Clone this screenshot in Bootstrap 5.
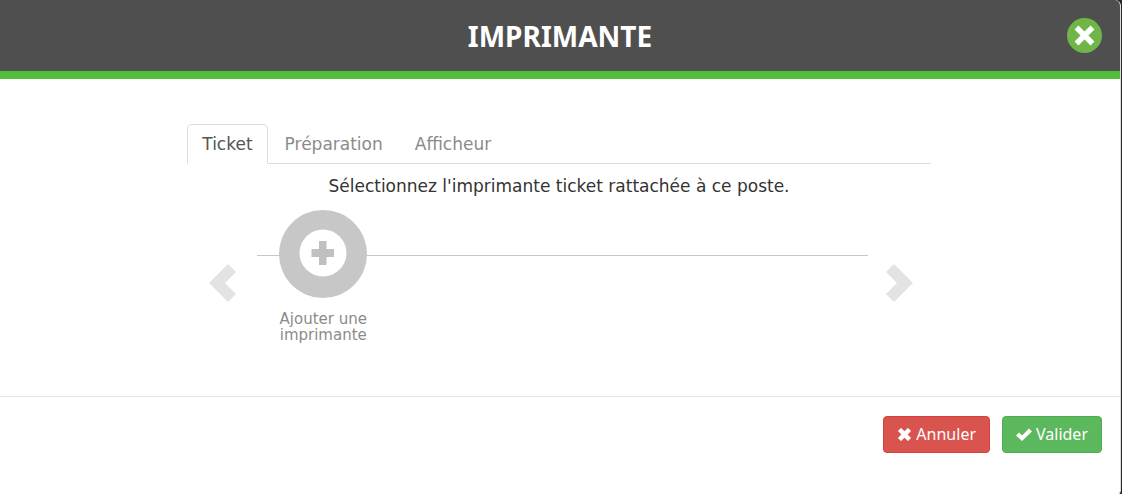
<!DOCTYPE html>
<html lang="fr">
<head>
<meta charset="utf-8">
<meta name="viewport" content="width=device-width, initial-scale=1">
<title>Imprimante</title>
<link href="https://cdn.jsdelivr.net/npm/bootstrap@5.3.0/dist/css/bootstrap.min.css" rel="stylesheet">
<style>
  body { background: #222b2b; font-family: Verdana, "DejaVu Sans", sans-serif; font-size: 17px; color: #333; }
  .dialog-panel { background: #fff; margin-right: 1px; border-right: 1px solid #ddd; border-radius: 0 6px 6px 0; overflow: hidden; }
  .dialog-head { background: #4f4f4f; border-bottom: 8px solid #51bd3b; display: grid; grid-template-columns: 1fr auto 1fr; padding: 18px; }
  .dialog-title { grid-column: 2; font: bold 28px/32px "Noto Sans", sans-serif; color: #fff; }
  .close-round { width: 35px; height: 35px; border-radius: 50%; background: #70b548; border: 0; padding: 0; }
  .dialog-main { padding: 45px 2px 48px 0; }
  .pane { width: 66.5%; }
  .printer-tabs { --bs-nav-link-padding-x: 14px; --bs-nav-link-padding-y: 9px; --bs-nav-link-color: #8b8b8b; --bs-nav-link-hover-color: #666; --bs-nav-tabs-link-active-color: #555; --bs-nav-tabs-border-radius: 5px; --bs-nav-tabs-border-color: #ddd; --bs-nav-tabs-link-active-border-color: #ddd #ddd #fff; gap: 2px; }
  .printer-tabs .nav-link { line-height: 20px; }
  .hint { line-height: 24px; margin: 10px 0 12px; }
  .carousel-row { padding: 0 18px 0 22px; gap: 18px; }
  .arrow { border: 0; background: none; padding: 0; margin-top: 54px; color: #e3e3e3; line-height: 0; }
  .arrow:first-child { margin-right: 3px; }
  .track { background: linear-gradient(#c7c7c7, #c7c7c7) 0 45px / 100% 1px no-repeat; padding-left: 12px; }
  .add-printer { width: 108px; border: 0; background: none; padding: 0; color: #8b8b8b; font-size: 15px; line-height: 16px; }
  .add-printer svg { display: block; margin: 0 auto 13px; }
  .dialog-foot { border-top: 1px solid #e5e5e5; padding: 19px 18px 43px; gap: 12px; }
  .dialog-foot .btn { --bs-btn-padding-x: 13px; --bs-btn-padding-y: 7px; --bs-btn-border-radius: 4px; --bs-btn-font-size: 16px; --bs-btn-line-height: 21px; font-family: "Noto Sans", sans-serif; gap: 4px; }
  .btn-cancel { --bs-btn-color: #fff; --bs-btn-bg: #d9534f; --bs-btn-border-color: #d43f3a; --bs-btn-hover-bg: #c9302c; --bs-btn-hover-color: #fff; }
  .btn-confirm { --bs-btn-color: #fff; --bs-btn-bg: #5cb85c; --bs-btn-border-color: #4cae4c; --bs-btn-hover-bg: #449d44; --bs-btn-hover-color: #fff; }
</style>
</head>
<body>
<div class="dialog-panel" role="dialog" aria-labelledby="title">
  <header class="dialog-head align-items-center">
    <h1 class="dialog-title m-0" id="title">IMPRIMANTE</h1>
    <button type="button" class="close-round ms-auto d-flex align-items-center justify-content-center" aria-label="Fermer">
      <svg width="21" height="21" viewBox="0 0 21 21" fill="none" stroke="#fff" stroke-width="5.500"><path d="M2.500 2.500 18.500 18.500M18.500 2.500 2.500 18.500"/></svg>
    </button>
  </header>
  <main class="dialog-main">
    <div class="pane mx-auto">
      <ul class="nav nav-tabs printer-tabs">
        <li class="nav-item"><a class="nav-link active" aria-current="page" href="#">Ticket</a></li>
        <li class="nav-item"><a class="nav-link" href="#">Préparation</a></li>
        <li class="nav-item"><a class="nav-link" href="#">Afficheur</a></li>
      </ul>
      <p class="hint text-center">Sélectionnez l'imprimante ticket rattachée à ce poste.</p>
      <div class="carousel-row d-flex align-items-start">
        <button type="button" class="arrow" aria-label="Précédent">
          <svg width="27" height="38" viewBox="0 0 27 38" fill="currentColor"><path d="M19 0 27 8 16 19 27 30 19 38 0 19z"/></svg>
        </button>
        <div class="track flex-grow-1">
          <button type="button" class="add-printer">
            <svg width="88" height="88" viewBox="0 0 88 88"><circle cx="44" cy="44" r="44" fill="#c7c7c7"/><circle cx="44" cy="43" r="23.500" fill="#fff"/><path d="M40 31h7.500v8H55v8h-7.500v8H40v-8h-7.500v-8H40z" fill="#c0c0c0"/></svg>
            Ajouter une imprimante
          </button>
        </div>
        <button type="button" class="arrow" aria-label="Suivant">
          <svg width="27" height="38" viewBox="0 0 27 38" fill="currentColor"><path d="M8 0 0 8 11 19 0 30 8 38 27 19z"/></svg>
        </button>
      </div>
    </div>
  </main>
  <footer class="dialog-foot d-flex justify-content-end">
    <button type="button" class="btn btn-cancel d-flex align-items-center">
      <svg width="15" height="13" viewBox="0 0 15 13" fill="none" stroke="#fff" stroke-width="4.500"><path d="M2.500 1.500 12.500 11.500M12.500 1.500 2.500 11.500"/></svg>
      Annuler
    </button>
    <button type="button" class="btn btn-confirm d-flex align-items-center">
      <svg width="16" height="13" viewBox="0 0 16 13" fill="#fff"><path d="M0 7.500 3 4.500 6 7.500 13 .5 16 3.500 6 13z"/></svg>
      Valider
    </button>
  </footer>
</div>
<script src="https://cdn.jsdelivr.net/npm/bootstrap@5.3.0/dist/js/bootstrap.bundle.min.js"></script>
</body>
</html>
